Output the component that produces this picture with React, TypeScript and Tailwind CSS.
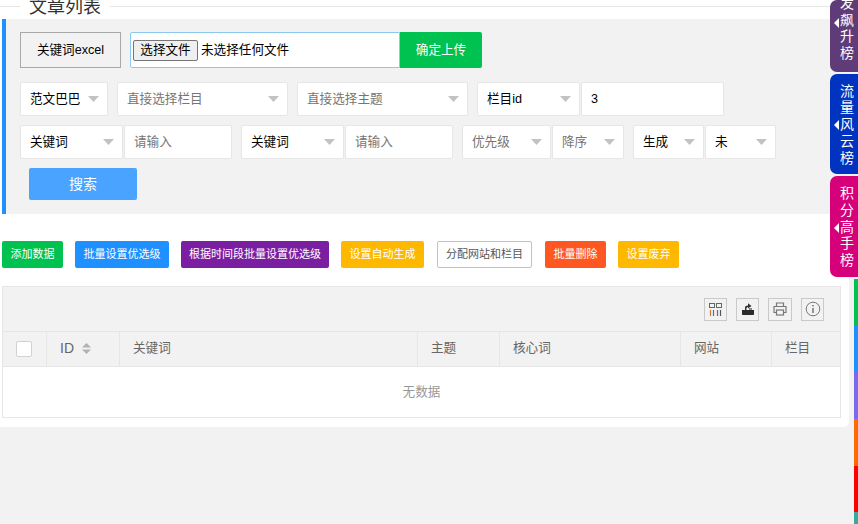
import React from 'react';

const fontStack = 'font-["Liberation_Sans","Noto_Sans_CJK_SC",sans-serif]';

function Caret() {
  return (
    <svg width="11" height="6" viewBox="0 0 11 6" className="absolute right-[8px] top-[13px]">
      <path d="M0 0 L11 0 L5.5 6 Z" fill="#c2c2c2" />
    </svg>
  );
}

function Select({ label, muted, width }: { label: string; muted?: boolean; width: string }) {
  return (
    <div className={`relative flex h-full items-center border border-[#e6e6e6] rounded-[2px] bg-white pl-[9px] text-[12.6px] ${width} ${muted ? 'text-[#757575]' : 'text-black'}`}>
      {label}
      <Caret />
    </div>
  );
}

function TextBox({ label, muted, width }: { label: string; muted?: boolean; width: string }) {
  return (
    <div className={`flex h-full items-center border border-[#e6e6e6] rounded-[2px] bg-white pl-[9px] text-[12.6px] ${width} ${muted ? 'text-[#757575]' : 'text-black'}`}>
      {label}
    </div>
  );
}

const actions = [
  { label: '添加数据', cls: 'w-[61px] bg-[#00c250] text-white' },
  { label: '批量设置优选级', cls: 'w-[94px] bg-[#1e90ff] text-white' },
  { label: '根据时间段批量设置优选级', cls: 'w-[148px] bg-[#7b1fa2] text-white' },
  { label: '设置自动生成', cls: 'w-[83px] bg-[#ffb800] text-white' },
  { label: '分配网站和栏目', cls: 'ml-[1px] w-[95px] bg-white text-[#555555] border border-[#c2c2c2]' },
  { label: '批量删除', cls: 'ml-[1px] w-[61px] bg-[#ff5722] text-white' },
  { label: '设置废弃', cls: 'w-[61px] bg-[#ffb800] text-white' },
];

const columns = [
  { label: '关键词', cls: 'w-[298px] pl-[13px]' },
  { label: '主题', cls: 'w-[82px] pl-[13px]' },
  { label: '核心词', cls: 'w-[181px] pl-[13px]' },
  { label: '网站', cls: 'w-[91px] pl-[13px]' },
  { label: '栏目', cls: 'flex-1 pl-[13px]' },
];

const sideTabs = [
  { chars: ['发', '飙', '升', '榜'], cls: 'h-[72px] bg-[#5f3b78] justify-end pb-[10px]', arrow: 'top-[18px]' },
  { chars: ['流', '量', '风', '云', '榜'], cls: 'h-[100px] bg-[#0033bf] justify-center pt-[1px]', arrow: 'top-[46px]' },
  { chars: ['积', '分', '高', '手', '榜'], cls: 'h-[101px] bg-[#d6007a] justify-center pt-[1px]', arrow: 'top-[47px]' },
];

const strips = [
  'bg-[#00c250]',
  'bg-[#1e90ff]',
  'bg-[#7b68ee]',
  'bg-[#ff6a00]',
  'bg-[#ff0000]',
];

function ToolIcon({ children, className }: { children: React.ReactNode; className?: string }) {
  return (
    <div className={`ml-[9px] flex h-[23px] items-center justify-center border border-[#c9c9c9] ${className ?? 'w-[23px]'}`}>
      {children}
    </div>
  );
}

export default function App() {
  return (
    <div className={`relative h-[524px] w-[858px] overflow-hidden bg-[#f2f2f2] ${fontStack}`}>
      <div className="h-[427px] w-[849px] rounded-br-[5px] bg-white">
        <div className="flex h-[19px] items-start overflow-hidden">
          <div className="mt-[6px] h-px w-[20px] bg-[#e6e6e6]" />
          <div className="mt-[-5px] w-[90px] pl-[9px] text-lg leading-[24px] text-[#333333]">文章列表</div>
          <div className="mt-[6px] h-px flex-1 bg-[#e6e6e6]" />
        </div>

        <div className="ml-[2px] h-[195px] border-l-4 border-[#1e90ff] bg-[#f2f2f2] pl-[14px] pt-[13px]">
          <div className="flex h-[36px] items-stretch text-[12.6px]">
            <div className="flex w-[101px] items-center justify-center border border-[#a8a8a8] text-black">关键词excel</div>
            <div className="ml-[9px] flex w-[270px] items-center rounded-l-[2px] border border-[#8cc9ee] bg-white pl-[2px]">
              <span className="flex h-[21px] w-[65px] items-center justify-center rounded-[2px] border border-[#767676] bg-[#efefef] text-black">选择文件</span>
              <span className="ml-[3px] text-black">未选择任何文件</span>
            </div>
            <div className="flex w-[82px] items-center justify-center rounded-r-[2px] bg-[#00c250] text-white">确定上传</div>
          </div>

          <div className="mt-[14px] flex h-[34px] items-stretch">
            <Select label="范文巴巴" width="w-[88px]" />
            <div className="ml-[9px]"><Select label="直接选择栏目" muted width="w-[171px]" /></div>
            <div className="ml-[9px]"><Select label="直接选择主题" muted width="w-[171px]" /></div>
            <div className="ml-[9px]"><Select label="栏目id" width="w-[103px]" /></div>
            <div className="ml-[1px]"><TextBox label="3" width="w-[143px]" /></div>
          </div>

          <div className="mt-[9px] flex h-[34px] items-stretch">
            <Select label="关键词" width="w-[103px]" />
            <div className="ml-[1px]"><TextBox label="请输入" muted width="w-[108px]" /></div>
            <div className="ml-[9px]"><Select label="关键词" width="w-[103px]" /></div>
            <div className="ml-[1px]"><TextBox label="请输入" muted width="w-[108px]" /></div>
            <div className="ml-[9px]"><Select label="优先级" muted width="w-[89px]" /></div>
            <div className="ml-[1px]"><Select label="降序" muted width="w-[72px]" /></div>
            <div className="ml-[9px]"><Select label="生成" width="w-[71px]" /></div>
            <div className="ml-[1px]"><Select label="未" width="w-[71px]" /></div>
          </div>

          <div className="ml-[9px] mt-[9px] flex h-[32px] w-[108px] items-center justify-center rounded-[2px] bg-[#4aa4ff] text-sm text-white">搜索</div>
        </div>

        <div className="ml-[2px] mt-[27px] flex h-[27px] gap-[12px]">
          {actions.map((a) => (
            <div key={a.label} className={`flex items-center justify-center rounded-[2px] text-[11px] ${a.cls}`}>
              {a.label}
            </div>
          ))}
        </div>

        <div className="ml-[2px] mt-[18px] h-[132px] w-[839px] border border-[#e6e6e6]">
          <div className="flex h-[45px] items-center justify-end border-b border-[#e6e6e6] bg-[#f2f2f2] pr-[16px]">
            <ToolIcon>
              <svg width="13" height="13" viewBox="0 0 13 13" fill="none">
                <rect x="0.5" y="0.5" width="5" height="4" stroke="#666666" />
                <rect x="7.5" y="0.5" width="5" height="4" stroke="#666666" />
                <path d="M1.5 7V13" stroke="#c77a2a" strokeWidth="1.2" />
                <path d="M4.5 7V13" stroke="#3f6fc4" strokeWidth="1.2" />
                <path d="M8.5 7V13" stroke="#8a4fb0" strokeWidth="1.2" />
                <path d="M11.5 7V13" stroke="#555555" strokeWidth="1.2" />
              </svg>
            </ToolIcon>
            <ToolIcon>
              <svg width="14" height="14" viewBox="0 0 14 14">
                <path d="M1 8H13V12C13 12.6 12.6 13 12 13H2C1.4 13 1 12.6 1 12Z" fill="#2b2b2b" />
                <path d="M4 8V5.5C4 4.4 5 3.6 7 3.6V1.2L10.5 3.9L7 6.6V5C6 5 5.4 5.7 5.4 8Z" fill="#333333" />
                <rect x="8" y="6" width="3" height="2" fill="#888888" />
              </svg>
            </ToolIcon>
            <ToolIcon className="w-[24px]">
              <svg width="14" height="14" viewBox="0 0 14 14" fill="none" stroke="#777777" strokeWidth="1.2">
                <path d="M3.5 4.5V1H10.5V4.5" />
                <path d="M3.5 10.5H1V4.5H13V10.5H10.5" />
                <rect x="3.5" y="8" width="7" height="5" />
              </svg>
            </ToolIcon>
            <ToolIcon>
              <svg width="16" height="16" viewBox="0 0 16 16" fill="none">
                <circle cx="8" cy="8" r="6.8" stroke="#777777" />
                <path d="M8 7V12" stroke="#555555" strokeWidth="1.2" />
                <circle cx="8" cy="4.8" r="0.8" fill="#555555" />
              </svg>
            </ToolIcon>
          </div>

          <div className="flex h-[35px] border-b border-[#e6e6e6] bg-[#f2f2f2] pb-[2px] text-[12.6px] text-[#666666]">
            <div className="mb-[-2px] flex w-[44px] items-center border-r border-[#e6e6e6] pl-[13px]">
              <div className="h-[16px] w-[16px] rounded-[2px] border border-[#d2d2d2] bg-white" />
            </div>
            <div className="mb-[-2px] flex w-[73px] items-center border-r border-[#e6e6e6] pb-[2px] pl-[13px]">
              <span className="text-sm">ID</span>
              <svg width="9" height="11" viewBox="0 0 9 11" className="ml-[8px]">
                <path d="M4.5 0L9 4.5H0Z" fill="#b2b2b2" />
                <path d="M4.5 11L0 6.5H9Z" fill="#b2b2b2" />
              </svg>
            </div>
            {columns.map((c, i) => (
              <div
                key={c.label}
                className={`mb-[-2px] flex items-center pb-[2px] ${c.cls} ${i < columns.length - 1 ? 'border-r border-[#e6e6e6]' : ''}`}
              >
                {c.label}
              </div>
            ))}
          </div>

          <div className="flex h-[49px] items-center justify-center pt-[1px] text-[12.6px] text-[#999999]">无数据</div>
        </div>
      </div>

      {/* side ranking tabs */}
      <div className="absolute right-0 top-0 flex w-[28px] flex-col gap-[2px]">
        {sideTabs.map((t) => (
          <div
            key={t.chars.join('')}
            className={`relative flex flex-col items-center rounded-bl-[7px] rounded-tl-[7px] pl-[6px] text-sm leading-[16.8px] text-white ${t.cls}`}
          >
            <svg width="5" height="10" viewBox="0 0 5 10" className={`absolute left-[4px] ${t.arrow}`}>
              <path d="M5 0V10L0 5Z" fill="#ffffff" />
            </svg>
            {t.chars.map((ch, i) => (
              <span key={i}>{ch}</span>
            ))}
          </div>
        ))}
      </div>

      {/* colour strips at the right edge */}
      <div className="absolute right-0 top-[279px] flex h-[245px] w-[4px] flex-col">
        {strips.map((s) => (
          <div key={s} className={`h-[46.7px] shrink-0 ${s}`} />
        ))}
        <div className="flex-1 bg-[#3aa89a]" />
      </div>
    </div>
  );
}
